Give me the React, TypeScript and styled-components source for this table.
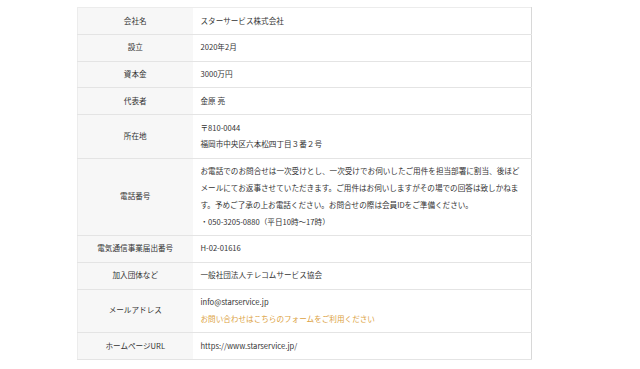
import React from "react";
import styled, { createGlobalStyle } from "styled-components";

const Global = createGlobalStyle`
  html, body { margin: 0; padding: 0; background: #fff; }
  body { font-family: "Noto Sans CJK JP", "Noto Sans", sans-serif; color: #333; }
`;

const Page = styled.div`
  width: 640px;
  height: 369px;
  overflow: hidden;
  padding: 7px 0 0 77px;
  box-sizing: border-box;
`;

const Table = styled.table`
  width: 455px;
  border-collapse: collapse;
  table-layout: fixed;
  border-top: 1px solid #ececec;
  border-left: 1px solid #ececec;
  border-right: 1px solid #d8d8d8;
  font-size: 7.6px;
  line-height: 16.8px;
`;

const Row = styled.tr`
  border-bottom: 1px solid #e4e4e4;
`;

const Head = styled.th`
  box-sizing: border-box;
  width: 115px;
  background: #f7f7f7;
  font-weight: normal;
  text-align: center;
  vertical-align: middle;
  padding: 4.5px 2px;
  color: #333;
  white-space: nowrap;
`;

const Cell = styled.td`
  background: #fff;
  text-align: left;
  vertical-align: middle;
  padding: 4.5px 6px 4.5px 8px;
  color: #333;
`;

const Line = styled.div``;

const Link = styled.div`
  color: #dca242;
`;

type Item = { label: string; body: React.ReactNode };

const items: Item[] = [
  { label: "会社名", body: "スターサービス株式会社" },
  { label: "設立", body: "2020年2月" },
  { label: "資本金", body: "3000万円" },
  { label: "代表者", body: "金原 亮" },
  {
    label: "所在地",
    body: (
      <>
        <Line>〒810-0044</Line>
        <Line>福岡市中央区六本松四丁目３番２号</Line>
      </>
    ),
  },
  {
    label: "電話番号",
    body: (
      <>
        <Line>
          お電話でのお問合せは一次受けとし、一次受けでお伺いしたご用件を担当部署に割当、後ほどメールにてお返事させていただきます。ご用件はお伺いしますがその場での回答は致しかねます。予めご了承の上お電話ください。お問合せの際は会員IDをご準備ください。
        </Line>
        <Line>・050-3205-0880（平日10時〜17時）</Line>
      </>
    ),
  },
  { label: "電気通信事業届出番号", body: "H-02-01616" },
  { label: "加入団体など", body: "一般社団法人テレコムサービス協会" },
  {
    label: "メールアドレス",
    body: (
      <>
        <Line>info@starservice.jp</Line>
        <Link>お問い合わせはこちらのフォームをご利用ください</Link>
      </>
    ),
  },
  { label: "ホームページURL", body: "https://www.starservice.jp/" },
];

export default function App() {
  return (
    <Page>
      <Global />
      <Table>
        <tbody>
          {items.map((it) => (
            <Row key={it.label}>
              <Head>{it.label}</Head>
              <Cell>{it.body}</Cell>
            </Row>
          ))}
        </tbody>
      </Table>
    </Page>
  );
}
